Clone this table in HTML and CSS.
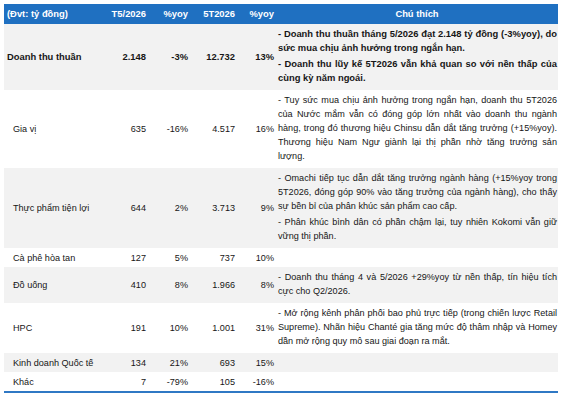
FILE: index.html
```html
<!DOCTYPE html>
<html lang="vi">
<head>
<meta charset="utf-8">
<title>Doanh thu</title>
<link rel="stylesheet" href="styles.css">
</head>
<body>
<table class="tbl">
  <colgroup>
    <col class="c-label"><col class="c-num1"><col class="c-yoy1"><col class="c-num2"><col class="c-yoy2"><col class="c-note">
  </colgroup>
  <thead>
    <tr>
      <th class="lab">(Đvt: tỷ đồng)</th>
      <th class="num">T5/2026</th>
      <th class="num">%yoy</th>
      <th class="num">5T2026</th>
      <th class="num">%yoy</th>
      <th class="note-h">Chú thích</th>
    </tr>
  </thead>
  <tbody>
    <tr class="shade total">
      <td class="lab">Doanh thu thuần</td>
      <td class="num">2.148</td>
      <td class="num">-3%</td>
      <td class="num">12.732</td>
      <td class="num">13%</td>
      <td class="note">
        <p>- Doanh thu thuần tháng 5/2026 đạt 2.148 tỷ đồng (-3%yoy), do sức mua chịu ảnh hưởng trong ngắn hạn.</p>
        <p>- Doanh thu lũy kế 5T2026 vẫn khả quan so với nền thấp của cùng kỳ năm ngoái.</p>
      </td>
    </tr>
    <tr>
      <td class="lab sub">Gia vị</td>
      <td class="num">635</td>
      <td class="num">-16%</td>
      <td class="num">4.517</td>
      <td class="num">16%</td>
      <td class="note">
        <p>- Tuy sức mua chịu ảnh hưởng trong ngắn hạn, doanh thu 5T2026 của Nước mắm vẫn có đóng góp lớn nhất vào doanh thu ngành hàng, trong đó thương hiệu Chinsu dẫn dắt tăng trưởng (+15%yoy). Thương hiệu Nam Ngư giành lại thị phần nhờ tăng trưởng sản lượng.</p>
      </td>
    </tr>
    <tr class="shade">
      <td class="lab sub">Thực phẩm tiện lợi</td>
      <td class="num">644</td>
      <td class="num">2%</td>
      <td class="num">3.713</td>
      <td class="num">9%</td>
      <td class="note">
        <p>- Omachi tiếp tục dẫn dắt tăng trưởng ngành hàng (+15%yoy trong 5T2026, đóng góp 90% vào tăng trưởng của ngành hàng), cho thấy sự bền bỉ của phân khúc sản phẩm cao cấp.</p>
        <p>- Phân khúc bình dân có phần chậm lại, tuy nhiên Kokomi vẫn giữ vững thị phần.</p>
      </td>
    </tr>
    <tr>
      <td class="lab sub">Cà phê hòa tan</td>
      <td class="num">127</td>
      <td class="num">5%</td>
      <td class="num">737</td>
      <td class="num">10%</td>
      <td class="note empty"></td>
    </tr>
    <tr class="shade">
      <td class="lab sub">Đồ uống</td>
      <td class="num">410</td>
      <td class="num">8%</td>
      <td class="num">1.966</td>
      <td class="num">8%</td>
      <td class="note">
        <p>- Doanh thu tháng 4 và 5/2026 +29%yoy từ nền thấp, tín hiệu tích cực cho Q2/2026.</p>
      </td>
    </tr>
    <tr>
      <td class="lab sub">HPC</td>
      <td class="num">191</td>
      <td class="num">10%</td>
      <td class="num">1.001</td>
      <td class="num">31%</td>
      <td class="note">
        <p>- Mở rộng kênh phân phối bao phủ trực tiếp (trong chiến lược Retail Supreme). Nhãn hiệu Chanté gia tăng mức độ thâm nhập và Homey dần mở rộng quy mô sau giai đoạn ra mắt.</p>
      </td>
    </tr>
    <tr class="shade">
      <td class="lab sub">Kinh doanh Quốc tế</td>
      <td class="num">134</td>
      <td class="num">21%</td>
      <td class="num">693</td>
      <td class="num">15%</td>
      <td class="note empty"></td>
    </tr>
    <tr class="last">
      <td class="lab sub">Khác</td>
      <td class="num">7</td>
      <td class="num">-79%</td>
      <td class="num">105</td>
      <td class="num">-16%</td>
      <td class="note empty"></td>
    </tr>
  </tbody>
</table>
</body>
</html>
```

FILE: styles.css
```css
html, body {
  margin: 0;
  padding: 0;
  background: #ffffff;
}
body {
  padding: 4px 5px 0 4px;
  font-family: "Liberation Sans", Arial, sans-serif;
  font-size: 9.1px;
  line-height: 14px;
  color: #161616;
}
.tbl {
  width: 554px;
  border-collapse: collapse;
  table-layout: fixed;
}
.c-label { width: 102px; }
.c-num1 { width: 42px; }
.c-yoy1 { width: 42px; }
.c-num2 { width: 47px; }
.c-yoy2 { width: 39px; }
.c-note { width: 282px; }

thead tr {
  background: #1f70c1;
  color: #ffffff;
}
th {
  font-weight: bold;
  font-size: 9.4px;
  padding: 3px 2px 3px 2px;
  height: 14px;
  vertical-align: middle;
  white-space: nowrap;
}
th.lab { text-align: left; padding-left: 3px; }
th.num { text-align: right; }
th.note-h { text-align: center; }

td {
  padding: 2.5px 2px;
  vertical-align: middle;
}
td.lab { text-align: left; padding-left: 3px; white-space: nowrap; }
td.lab.sub { padding-left: 9px; }
td.num { text-align: right; white-space: nowrap; }
td.note {
  padding: 3px 1px 3px 2px;
  text-align: justify;
}
td.note p {
  margin: 0 0 2px 0;
}
td.note.empty { padding: 2.5px 1px 2.5px 2px; }

.shade { background: #f2f2f2; }
.total td { font-weight: bold; font-size: 9.4px; }
.last td { border-bottom: 2px solid #2f78c4; }
```
